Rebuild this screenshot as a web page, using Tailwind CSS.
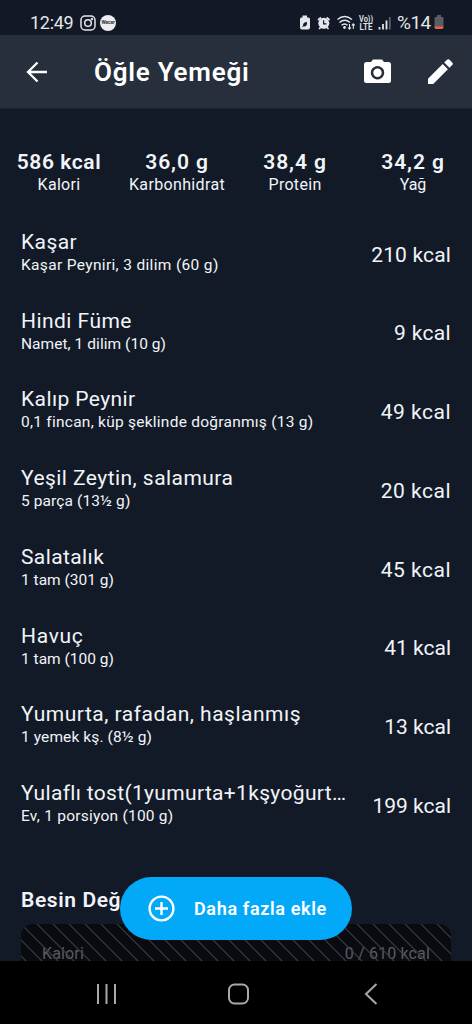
<!DOCTYPE html>
<html lang="tr">
<head>
<meta charset="utf-8">
<title>Öğle Yemeği</title>
<script src="https://cdn.jsdelivr.net/npm/@tailwindcss/browser@4"></script>
</head>
<body class="bg-black">
<div class="relative flex h-[1024px] w-[472px] flex-col overflow-hidden bg-[#131a27] font-[Roboto,'Noto_Sans',sans-serif] text-[#f1f4f8]">
  <div class="flex h-[35px] shrink-0 items-start bg-[#121826] pt-[12px] pl-[30px] pr-[29px] text-[#e3e6ea]">
    <span class="w-[50px] text-[18px] leading-[22px] tracking-[-0.3px] whitespace-nowrap">12:49</span>
    <svg class="mt-[3px] h-[16px] w-[16px]" viewBox="0 0 16 16" fill="none" stroke="currentColor" stroke-width="1.5"><rect x="1" y="1" width="14" height="14" rx="4"/><circle cx="8" cy="8" r="3.3"/><circle cx="12" cy="4" r=".5"/></svg>
    <span class="mt-[3px] ml-[4px] flex h-[16px] w-[16px] items-center justify-center rounded-full bg-[#eceef0] text-[5px] font-bold tracking-[-0.2px] text-[#30343b]">Wecer</span>
    <svg class="ml-auto h-[22px] w-[92px]" viewBox="298 12 92 22" fill="none" stroke="currentColor">
      <path d="M301.500 15.500h4.500v2h1.500q1.500 0 1.500 1.500v8.500q0 2-2 2h-6q-2 0-2-2V19q0-1.500 1.500-1.500h1z" fill="currentColor" stroke="none"/>
      <path d="M302 25.500q0-3.500 4-3.500q.3 4.500-3 4.500z" fill="#121826" stroke="none"/><path d="M301.300 27l2-2" stroke="#121826" stroke-width="1"/>
      <circle cx="322.800" cy="23.300" r="5.500" fill="currentColor" stroke="none"/>
      <path d="M317 20l3-2.500M328.600 20l-3-2.500M319.500 27.500l-1.500 1.500M326 27.500l1.500 1.500" stroke-width="1.700"/>
      <path d="M322.600 20.300v3.500h2.900" stroke="#121826" stroke-width="1.200"/>
      <path d="M336.500 19.500q7-6 14.500 0M338.500 22.500q5.200-4.500 10.500 0M340.500 25.300q3-2.600 6 0" stroke-width="1.500"/>
      <circle cx="343.500" cy="27.500" r="1.400" fill="currentColor" stroke="none"/>
      <path d="M348.500 24v5M347 27.500l1.500 1.700 1.500-1.700M352.300 29v-5M350.800 25.500l1.500-1.700 1.500 1.700" stroke-width="1.100"/>
      <g fill="currentColor" stroke="none" font-weight="600" font-size="8.500"><text x="358" y="22.300" textLength="14" lengthAdjust="spacingAndGlyphs">Vo))</text><text x="358.500" y="30" textLength="13" lengthAdjust="spacingAndGlyphs">LTE</text></g>
      <path d="M378.500 27v2.500M382 24v5.500M385.500 20.500v9" stroke-width="1.800"/><path d="M388.800 17v12.500" stroke="#5d626b" stroke-width="1.800"/>
    </svg>
    <span class="ml-[6px] w-[37px] text-[19px] leading-[22px] tracking-[-0.5px] whitespace-nowrap">%14</span>
    <svg class="mt-[3px] -mr-px h-[15px] w-[10px]" viewBox="0 0 10 15"><path d="M3 0h4v2h1.500q1 0 1 1v9q0 2-2 2h-5q-2 0-2-2v-9q0-1 1-1h1.500z" fill="#5b5d63"/><path d="M.5 11.500h9v.5q0 2-2 2h-5q-2 0-2-2z" fill="#e8633a"/></svg>
  </div>

  <header class="flex h-[74px] shrink-0 items-center border-b border-[#1b2330] bg-[#262f3b] pl-[26px] pr-[19px] text-white">
    <svg class="h-[22px] w-[22px]" viewBox="0 0 22 22" fill="none" stroke="currentColor" stroke-width="2.300"><path d="M21 11H2M11.500 1.500L2 11l9.500 9.500"/></svg>
    <h1 class="ml-[46px] w-[160px] text-[26px] leading-[32px] font-semibold tracking-[0.75px] whitespace-nowrap">Öğle Yemeği</h1>
    <svg class="ml-auto h-[25px] w-[27px]" viewBox="0 0 27 25" fill="currentColor"><path fill-rule="evenodd" d="M9 .5h9l2 2.500H24.500q2.500 0 2.500 2.500v16q0 2.500-2.500 2.500h-22Q0 24 0 21.500V5.500q0-2.500 2.500-2.500h4.500zM13.500 7a6.700 6.700 0 1 0 .01 0z"/><circle cx="13.500" cy="13.700" r="4.200"/></svg>
    <svg class="ml-[37px] h-[25px] w-[25px]" viewBox="0 0 25 25" fill="currentColor"><path d="M0 19.800L14.700 5.100l5.200 5.200L5.200 25H0zM16.200 3.600L19 .8q1.300-1.300 2.600 0l2.600 2.600q1.300 1.300 0 2.600l-2.800 2.800z"/></svg>
  </header>

  <section class="grid h-[88px] shrink-0 grid-cols-4 pt-[40px] text-center whitespace-nowrap">
    <div><div class="text-[21px] leading-[26px] font-semibold tracking-[0.6px]">586 kcal</div><div class="text-[16px] leading-[20px] tracking-[0.3px]">Kalori</div></div>
    <div><div class="text-[21px] leading-[26px] font-semibold tracking-[0.9px]">36,0 g</div><div class="text-[16px] leading-[20px] tracking-[0.35px]">Karbonhidrat</div></div>
    <div><div class="text-[21px] leading-[26px] font-semibold tracking-[0.9px]">38,4 g</div><div class="text-[16px] leading-[20px] tracking-[0.3px]">Protein</div></div>
    <div><div class="text-[21px] leading-[26px] font-semibold tracking-[0.9px]">34,2 g</div><div class="text-[16px] leading-[20px]">Yağ</div></div>
  </section>

  <ul class="flex shrink-0 flex-col pt-[18px] pr-[21px] pl-[21px] whitespace-nowrap">
    <li class="flex h-[78.750px] items-center justify-between"><div class="pb-[5px]"><div class="text-[21px] leading-[26px] tracking-[0.4px]">Kaşar</div><div class="text-[15.5px] leading-[20px] tracking-[0.34px]">Kaşar Peyniri, 3 dilim (60 g)</div></div><div class="pt-[2px] text-[21px] tracking-[0.15px]">210 kcal</div></li>
    <li class="flex h-[78.750px] items-center justify-between"><div class="pb-[5px]"><div class="text-[21px] leading-[26px] tracking-[0.45px]">Hindi Füme</div><div class="text-[15.5px] leading-[20px] tracking-[0.05px]">Namet, 1 dilim (10 g)</div></div><div class="pt-[2px] text-[21px] tracking-[0.35px]">9 kcal</div></li>
    <li class="flex h-[78.750px] items-center justify-between"><div class="pb-[5px]"><div class="text-[21px] leading-[26px] tracking-[0.4px]">Kalıp Peynir</div><div class="text-[15.5px] leading-[20px] tracking-[0.25px]">0,1 fincan, küp şeklinde doğranmış (13 g)</div></div><div class="pt-[2px] text-[21px] tracking-[0.5px]">49 kcal</div></li>
    <li class="flex h-[78.750px] items-center justify-between"><div class="pb-[5px]"><div class="text-[21px] leading-[26px] tracking-[0.45px]">Yeşil Zeytin, salamura</div><div class="text-[15.5px] leading-[20px] tracking-[0.1px]">5 parça (13½ g)</div></div><div class="pt-[2px] text-[21px] tracking-[0.5px]">20 kcal</div></li>
    <li class="flex h-[78.750px] items-center justify-between"><div class="pb-[5px]"><div class="text-[21px] leading-[26px] tracking-[0.4px]">Salatalık</div><div class="text-[15.5px] leading-[20px]">1 tam (301 g)</div></div><div class="pt-[2px] text-[21px] tracking-[0.5px]">45 kcal</div></li>
    <li class="flex h-[78.750px] items-center justify-between"><div class="pb-[5px]"><div class="text-[21px] leading-[26px] tracking-[0.7px]">Havuç</div><div class="text-[15.5px] leading-[20px]">1 tam (100 g)</div></div><div class="pt-[2px] text-[21px]">41 kcal</div></li>
    <li class="flex h-[78.750px] items-center justify-between"><div class="pb-[5px]"><div class="text-[21px] leading-[26px] tracking-[0.5px]">Yumurta, rafadan, haşlanmış</div><div class="text-[15.5px] leading-[20px] tracking-[0.1px]">1 yemek kş. (8½ g)</div></div><div class="pt-[2px] text-[21px]">13 kcal</div></li>
    <li class="flex h-[78.750px] items-center justify-between"><div class="pb-[5px]"><div class="text-[21px] leading-[26px] tracking-[0.33px]">Yulaflı tost(1yumurta+1kşyoğurt…</div><div class="text-[15.5px] leading-[20px] tracking-[0.24px]">Ev, 1 porsiyon (100 g)</div></div><div class="pt-[2px] text-[21px]">199 kcal</div></li>
  </ul>

  <section class="flex min-h-0 flex-1 flex-col overflow-hidden px-[21px] pt-[41px]">
    <h2 class="h-[38px] shrink-0 text-[21px] leading-[28px] font-semibold tracking-[0.6px] whitespace-nowrap">Besin Değerleri</h2>
    <div class="relative h-[60px] shrink-0 overflow-hidden rounded-[12px] bg-[#090b11]">
      <div class="flex justify-between pt-[20px] pr-[21px] pl-[21px] text-[16px] leading-[20px] tracking-[0.15px] text-[#5a5c60]"><span>Kalori</span><span>0 / 610 kcal</span></div>
      <svg class="absolute inset-0 h-full w-full"><defs><pattern id="hatch" width="16" height="16" patternUnits="userSpaceOnUse"><path d="M-2-2L18 18M-2 14l4 4M14-2l4 4" stroke="#3a3c40" stroke-width="1.200"/></pattern></defs><rect width="100%" height="100%" fill="url(#hatch)"/></svg>
    </div>
  </section>

  <nav class="flex h-[63px] shrink-0 items-start bg-black pt-[22px] pl-[96px] text-[#a9a9a9]">
    <svg class="h-[22px] w-[21px]" viewBox="0 0 21 22" stroke="currentColor" stroke-width="2"><path d="M2 1v20M10.500 1v20M19 1v20"/></svg>
    <svg class="ml-[110px] h-[22px] w-[23px]" viewBox="0 0 23 22" fill="none" stroke="currentColor" stroke-width="2"><rect x="2" y="1.500" width="19" height="19" rx="5.500"/></svg>
    <svg class="ml-[114px] h-[22px] w-[14px]" viewBox="0 0 14 22" fill="none" stroke="currentColor" stroke-width="2"><path d="M12.500 1L2 11l10.500 10"/></svg>
  </nav>

  <button class="absolute top-[877px] left-[120px] flex h-[63px] w-[232px] items-center rounded-full bg-[#03a9f9] pl-[28px] text-white">
    <svg class="h-[27px] w-[27px]" viewBox="0 0 27 27" fill="none" stroke="currentColor" stroke-width="2.400"><circle cx="13.500" cy="13.500" r="11.900"/><path d="M13.500 7v13M7 13.500h13"/></svg>
    <span class="ml-[19px] text-[18px] leading-[24px] font-semibold tracking-[0.65px] whitespace-nowrap">Daha fazla ekle</span>
  </button>
</div>
</body>
</html>
